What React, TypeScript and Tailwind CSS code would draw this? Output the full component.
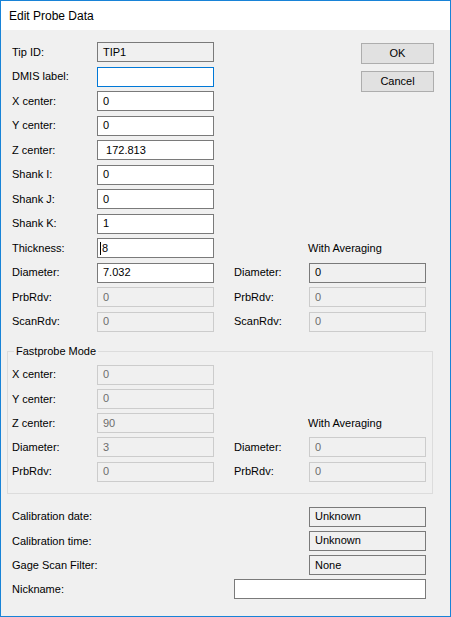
import { type FC, type ReactNode } from 'react'

type BoxKind = 'edit' | 'focus' | 'readonly' | 'disabled'

const boxStyles: Record<BoxKind, string> = {
	edit: 'border-[#7a7a7a] bg-white text-black',
	focus: 'border-[#0078d7] bg-white text-black',
	readonly: 'border-[#7a7a7a] bg-[#f0f0f0] text-black',
	disabled: 'border-[#cccccc] bg-[#f0f0f0] text-[#6d6d6d]'
}

const Box: FC<{ kind?: BoxKind; value?: ReactNode; className?: string }> = ({ kind = 'edit', value, className }) => (
	<div
		className={`flex h-[20px] items-center whitespace-pre border pl-[5px] leading-none ${boxStyles[kind]} ${className ?? 'w-[117px]'}`}
	>
		{value}
	</div>
)

const Label: FC<{ children: ReactNode; className?: string }> = ({ children, className }) => (
	<div className={`shrink-0 ${className ?? 'w-[85px]'}`}>{children}</div>
)

const Row: FC<{ label: string; kind?: BoxKind; value?: ReactNode; right?: ReactNode }> = ({ label, kind, value, right }) => (
	<div className="flex h-[20px] items-center">
		<Label>{label}</Label>
		<Box kind={kind} value={value} />
		{right && <div className="ml-[20px] flex items-center">{right}</div>}
	</div>
)

const RightField: FC<{ label: string; kind?: BoxKind; value?: string }> = ({ label, kind, value }) => (
	<>
		<Label className="w-[75px]">{label}</Label>
		<Box kind={kind} value={value} />
	</>
)

const Averaging = () => <div className="pl-[74px]">With Averaging</div>

const Button: FC<{ children: ReactNode }> = ({ children }) => (
	<div className="flex h-[21px] w-[73px] items-center justify-center border border-[#adadad] bg-[#e1e1e1]">{children}</div>
)

export default function App() {
	return (
		<div className="flex h-[617px] w-[451px] flex-col border border-[#1883d7] bg-[#f0f0f0] font-['Liberation_Sans',Arial,sans-serif] text-[11px] text-black">
			<div className="flex h-[29px] shrink-0 items-center bg-white pl-[8px] text-[12px]">Edit Probe Data</div>

			<div className="flex flex-col pt-[12px] pl-[11px]">
				<div className="flex flex-col gap-[4.5px]">
					<div className="flex">
						<div className="flex flex-col gap-[4.5px]">
							<Row label="Tip ID:" kind="readonly" value="TIP1" />
							<Row label="DMIS label:" kind="focus" />
							<Row label="X center:" value="0" />
							<Row label="Y center:" value="0" />
							<Row label="Z center:" value=" 172.813" />
							<Row label="Shank I:" value="0" />
							<Row label="Shank J:" value="0" />
							<Row label="Shank K:" value="1" />
						</div>
						<div className="mt-[1px] ml-[147px] flex flex-col gap-[7px]">
							<Button>OK</Button>
							<Button>Cancel</Button>
						</div>
					</div>
					<Row
						label="Thickness:"
						value={
							<span className="-ml-[3px] flex items-center gap-[1px]">
								<span className="h-[13px] w-px bg-black" />8
							</span>
						}
						right={<Averaging />}
					/>
					<Row label="Diameter:" value="7.032" right={<RightField label="Diameter:" kind="readonly" value="0" />} />
					<Row label="PrbRdv:" kind="disabled" value="0" right={<RightField label="PrbRdv:" kind="disabled" value="0" />} />
					<Row label="ScanRdv:" kind="disabled" value="0" right={<RightField label="ScanRdv:" kind="disabled" value="0" />} />
				</div>

				<div className="relative mt-[19px] -ml-[5px] flex w-[426px] flex-col gap-[4.25px] border border-[#dcdcdc] pt-[13px] pb-[11px] pl-[4px]">
					<span className="absolute -top-[7px] left-[6px] bg-[#f0f0f0] px-[2px] leading-[13px]">Fastprobe Mode</span>
					<Row label="X center:" kind="disabled" value="0" />
					<Row label="Y center:" kind="disabled" value="0" />
					<Row label="Z center:" kind="disabled" value="90" right={<Averaging />} />
					<Row label="Diameter:" kind="disabled" value="3" right={<RightField label="Diameter:" kind="disabled" value="0" />} />
					<Row label="PrbRdv:" kind="disabled" value="0" right={<RightField label="PrbRdv:" kind="disabled" value="0" />} />
				</div>

				<div className="mt-[13px] flex flex-col gap-[4.3px]">
					{[
						['Calibration date:', 'Unknown'],
						['Calibration time:', 'Unknown'],
						['Gage Scan Filter:', 'None']
					].map(([label, value]) => (
						<div key={label} className="flex h-[20px] items-center">
							<Label className="w-[297px]">{label}</Label>
							<Box kind="readonly" value={value} />
						</div>
					))}
					<div className="flex h-[20px] items-center">
						<Label className="w-[222px]">Nickname:</Label>
						<Box className="w-[192px]" />
					</div>
				</div>
			</div>
		</div>
	)
}
